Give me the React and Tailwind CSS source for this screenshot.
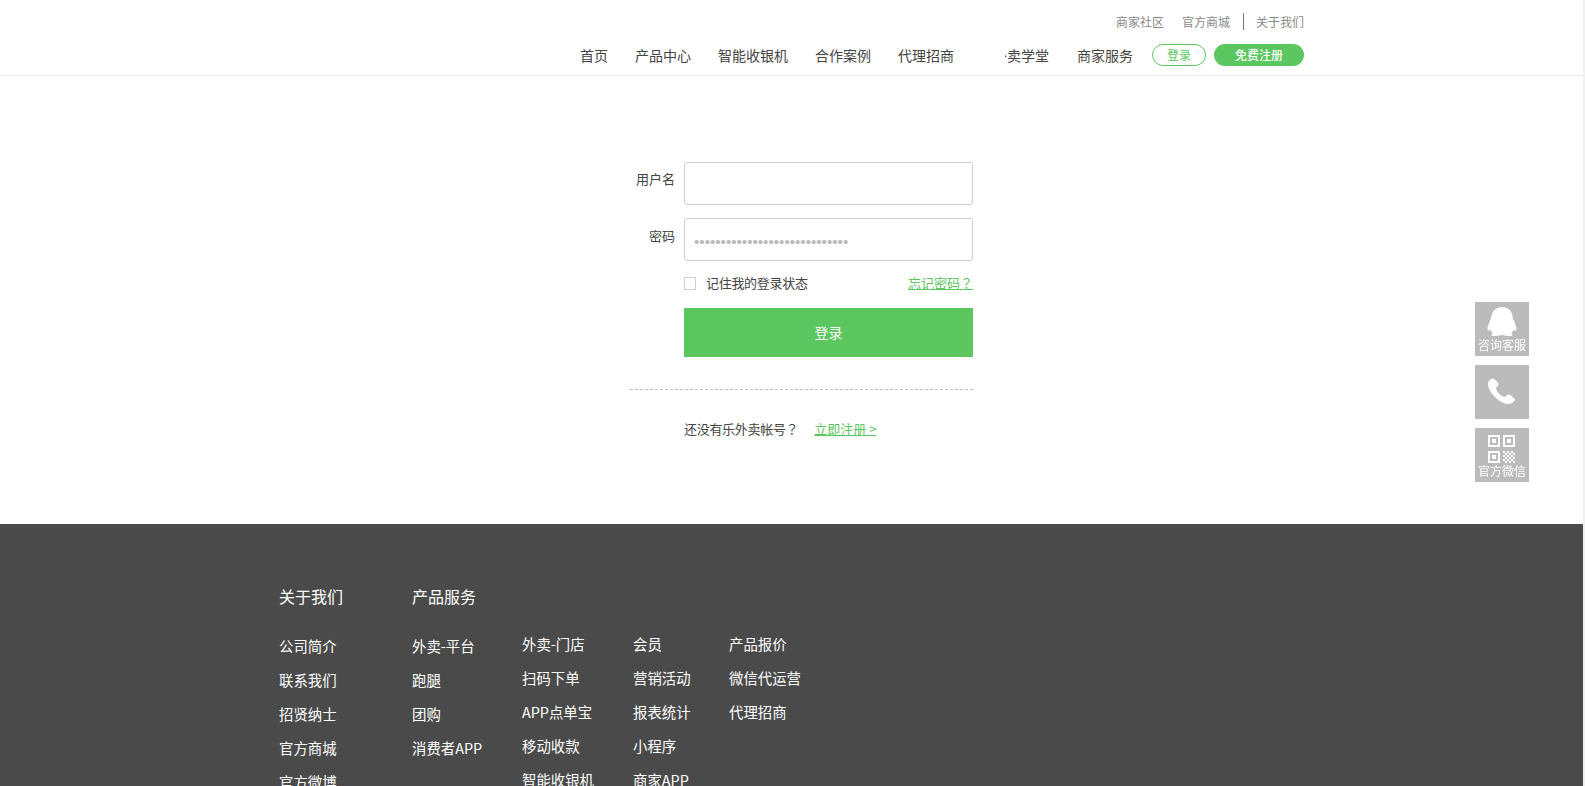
import React from 'react';

const nav = ['首页', '产品中心', '智能收银机', '合作案例', '代理招商'];

const aboutLinks = ['公司简介', '联系我们', '招贤纳士', '官方商城', '官方微博'];

const serviceCols = [
  { items: ['外卖-平台', '跑腿', '团购', '消费者APP'], className: 'w-[110px] pt-[2px]' },
  { items: ['外卖-门店', '扫码下单', 'APP点单宝', '移动收款', '智能收银机'], className: 'w-[111px]' },
  { items: ['会员', '营销活动', '报表统计', '小程序', '商家APP'], className: 'w-[96px]' },
  { items: ['产品报价', '微信代运营', '代理招商'], className: 'w-[100px]' },
];

const checker = [];
for (let y = 0; y < 6; y++) {
  for (let x = 0; x < 6; x++) {
    if ((x + y) % 2 === 0) checker.push([28 + x * 2, 23 + y * 2]);
  }
}

const QrSquare = ({ x, y }) => (
  <g>
    <rect x={x + 1} y={y + 1} width="10" height="10" fill="none" stroke="#fff" strokeWidth="2" />
    <rect x={x + 4} y={y + 4} width="4" height="4" fill="#fff" />
  </g>
);

const SideButton = ({ label, children }) => (
  <div className="flex h-[54px] w-[54px] flex-col bg-[#bbbbbb] text-center text-[12px] leading-[14px] text-white">
    <svg width="54" height="36" viewBox="0 0 54 36" className="shrink-0" fill="#fff">
      {children}
    </svg>
    {label && <span className="whitespace-nowrap">{label}</span>}
  </div>
);

const LinkColumn = ({ items, className }) => (
  <ul className={className}>
    {items.map((item) => (
      <li key={item} className="flex h-[34px] items-center whitespace-nowrap">{item}</li>
    ))}
  </ul>
);

export default function App() {
  return (
    <div className="flex h-[786px] w-[1585px] overflow-hidden bg-white font-['Noto_Sans_CJK_SC','Liberation_Sans',sans-serif]">
      <div className="flex w-[1583px] flex-col">
        {/* Header */}
        <header className="h-[76px] shrink-0 border-b border-[#e8e8e8] pr-[279px]">
          <div className="flex h-[44px] items-center justify-end pb-[1px] text-[12px] text-[#888888]">
            <a className="mr-[18px]">商家社区</a>
            <a>官方商城</a>
            <span className="ml-[13px] mr-[12px] h-[17px] w-px bg-[#777777]" />
            <a>关于我们</a>
          </div>
          <nav className="flex h-[22px] items-center justify-end text-[14px] text-[#444444]">
            {nav.map((item) => (
              <a key={item} className="mr-[27px]">{item}</a>
            ))}
            <a className="relative ml-[12px] mr-[28px]">
              外卖学堂
              <span className="absolute -left-[2px] top-0 h-full w-[14px] bg-white" />
            </a>
            <a className="mr-[19px]">商家服务</a>
            <a className="mr-[8px] flex h-[22px] w-[54px] items-center justify-center rounded-full border border-[#5cc660] text-[12px] text-[#5cc660]">登录</a>
            <a className="flex h-[22px] w-[90px] items-center justify-center rounded-full bg-[#5cc660] text-[12px] font-medium text-white">免费注册</a>
          </nav>
        </header>

        {/* Login form */}
        <main className="h-[448px] shrink-0 pl-[630px] pt-[86px] text-[13px] text-[#444444]">
          <div className="w-[343px]">
            <div className="mb-[13px] flex gap-[9px]">
              <label className="w-[45px] pt-[7px] text-right leading-[20px]">用户名</label>
              <input className="h-[43px] w-[289px] rounded-[3px] border border-[#d0d0d0] outline-none" />
            </div>
            <div className="mb-[14px] flex gap-[9px]">
              <label className="w-[45px] pt-[8px] text-right leading-[20px]">密码</label>
              <input
                type="password"
                readOnly
                value="12345678901234567890123456789"
                className="h-[43px] w-[289px] rounded-[3px] border border-[#d0d0d0] pl-[9px] pt-[3px] font-['Liberation_Sans',sans-serif] text-[15.2px] text-[#bbbbbb] outline-none"
              />
            </div>
            <div className="ml-[54px] flex h-[16px] items-center">
              <span className="h-[13px] w-[12px] border border-[#d0d0d0]" />
              <span className="ml-[10px] tracking-[-0.3px]">记住我的登录状态</span>
              <a className="ml-auto whitespace-nowrap text-[#5cc660] underline">
                忘记密码<span className="font-['Noto_Sans_CJK_TC',sans-serif]">？</span>
              </a>
            </div>
            <button className="ml-[54px] mt-[17px] block h-[49px] w-[289px] bg-[#5cc660] text-[14px] text-white">登录</button>
            <div className="mt-[32px] border-t border-dashed border-[#bdbdbd]" />
            <div className="ml-[54px] mt-[29px] flex items-center leading-[20px]">
              <span className="tracking-[-0.3px]">
                还没有乐外卖帐号<span className="font-['Noto_Sans_CJK_TC',sans-serif]">？</span>
              </span>
              <a className="ml-[16px] whitespace-nowrap text-[#5cc660] underline">立即注册 &gt;</a>
            </div>
          </div>
        </main>

        {/* Footer */}
        <footer className="flex flex-1 bg-[#4a4a4a] pl-[279px] pt-[60px] text-[14.4px] text-white">
          <div className="w-[133px]">
            <h4 className="text-[16px] font-normal leading-[24px]">关于我们</h4>
            <LinkColumn items={aboutLinks} className="mt-[21px]" />
          </div>
          <div>
            <h4 className="text-[16px] font-normal leading-[24px]">产品服务</h4>
            <div className="mt-[19px] flex">
              {serviceCols.map((col) => (
                <LinkColumn key={col.items[0]} items={col.items} className={col.className} />
              ))}
            </div>
          </div>
        </footer>
      </div>

      {/* Scrollbar sliver */}
      <div className="w-[2px] shrink-0 bg-[#f1f1f1]" />

      {/* Floating side buttons */}
      <aside className="fixed left-[1475px] top-[302px] flex flex-col gap-[9px]">
        <SideButton label="咨询客服">
          <path d="M27 5C20 5 16.5 10 16 16.5C14.5 20 12.5 24 12.5 27C12.5 29 14 29.5 15.5 27.5C16 29.5 17 31 18 31.5C16 32 15.5 34 19 34C22 34 25 33.5 27 33C29 33.5 32 34 35 34C38.5 34 38 32 36 31.5C37 31 38 29.5 38.5 27.5C40 29.5 41.5 29 41.5 27C41.5 24 39.5 20 38 16.5C37.5 10 34 5 27 5Z" />
        </SideButton>
        <div className="h-[54px] w-[54px] bg-[#bbbbbb]">
          <svg width="54" height="54" viewBox="0 0 54 54" fill="#fff">
            <path d="M17 13.5C15 14 13 16 13 19C13 27 25 39 33 39C36 39 39 37 40 35C40 33.5 36 30 33.5 29.5C32 29.5 31 31.5 29.5 32C26 31.5 21 26 21 23C22 21.5 23.5 21 23.5 19C23 17 19 13 17 13.5Z" />
          </svg>
        </div>
        <SideButton label="官方微信">
          <QrSquare x={13} y={7} />
          <QrSquare x={28} y={7} />
          <QrSquare x={13} y={23} />
          {checker.map(([x, y]) => (
            <rect key={`${x}-${y}`} x={x} y={y} width="2" height="2" />
          ))}
        </SideButton>
      </aside>
    </div>
  );
}
